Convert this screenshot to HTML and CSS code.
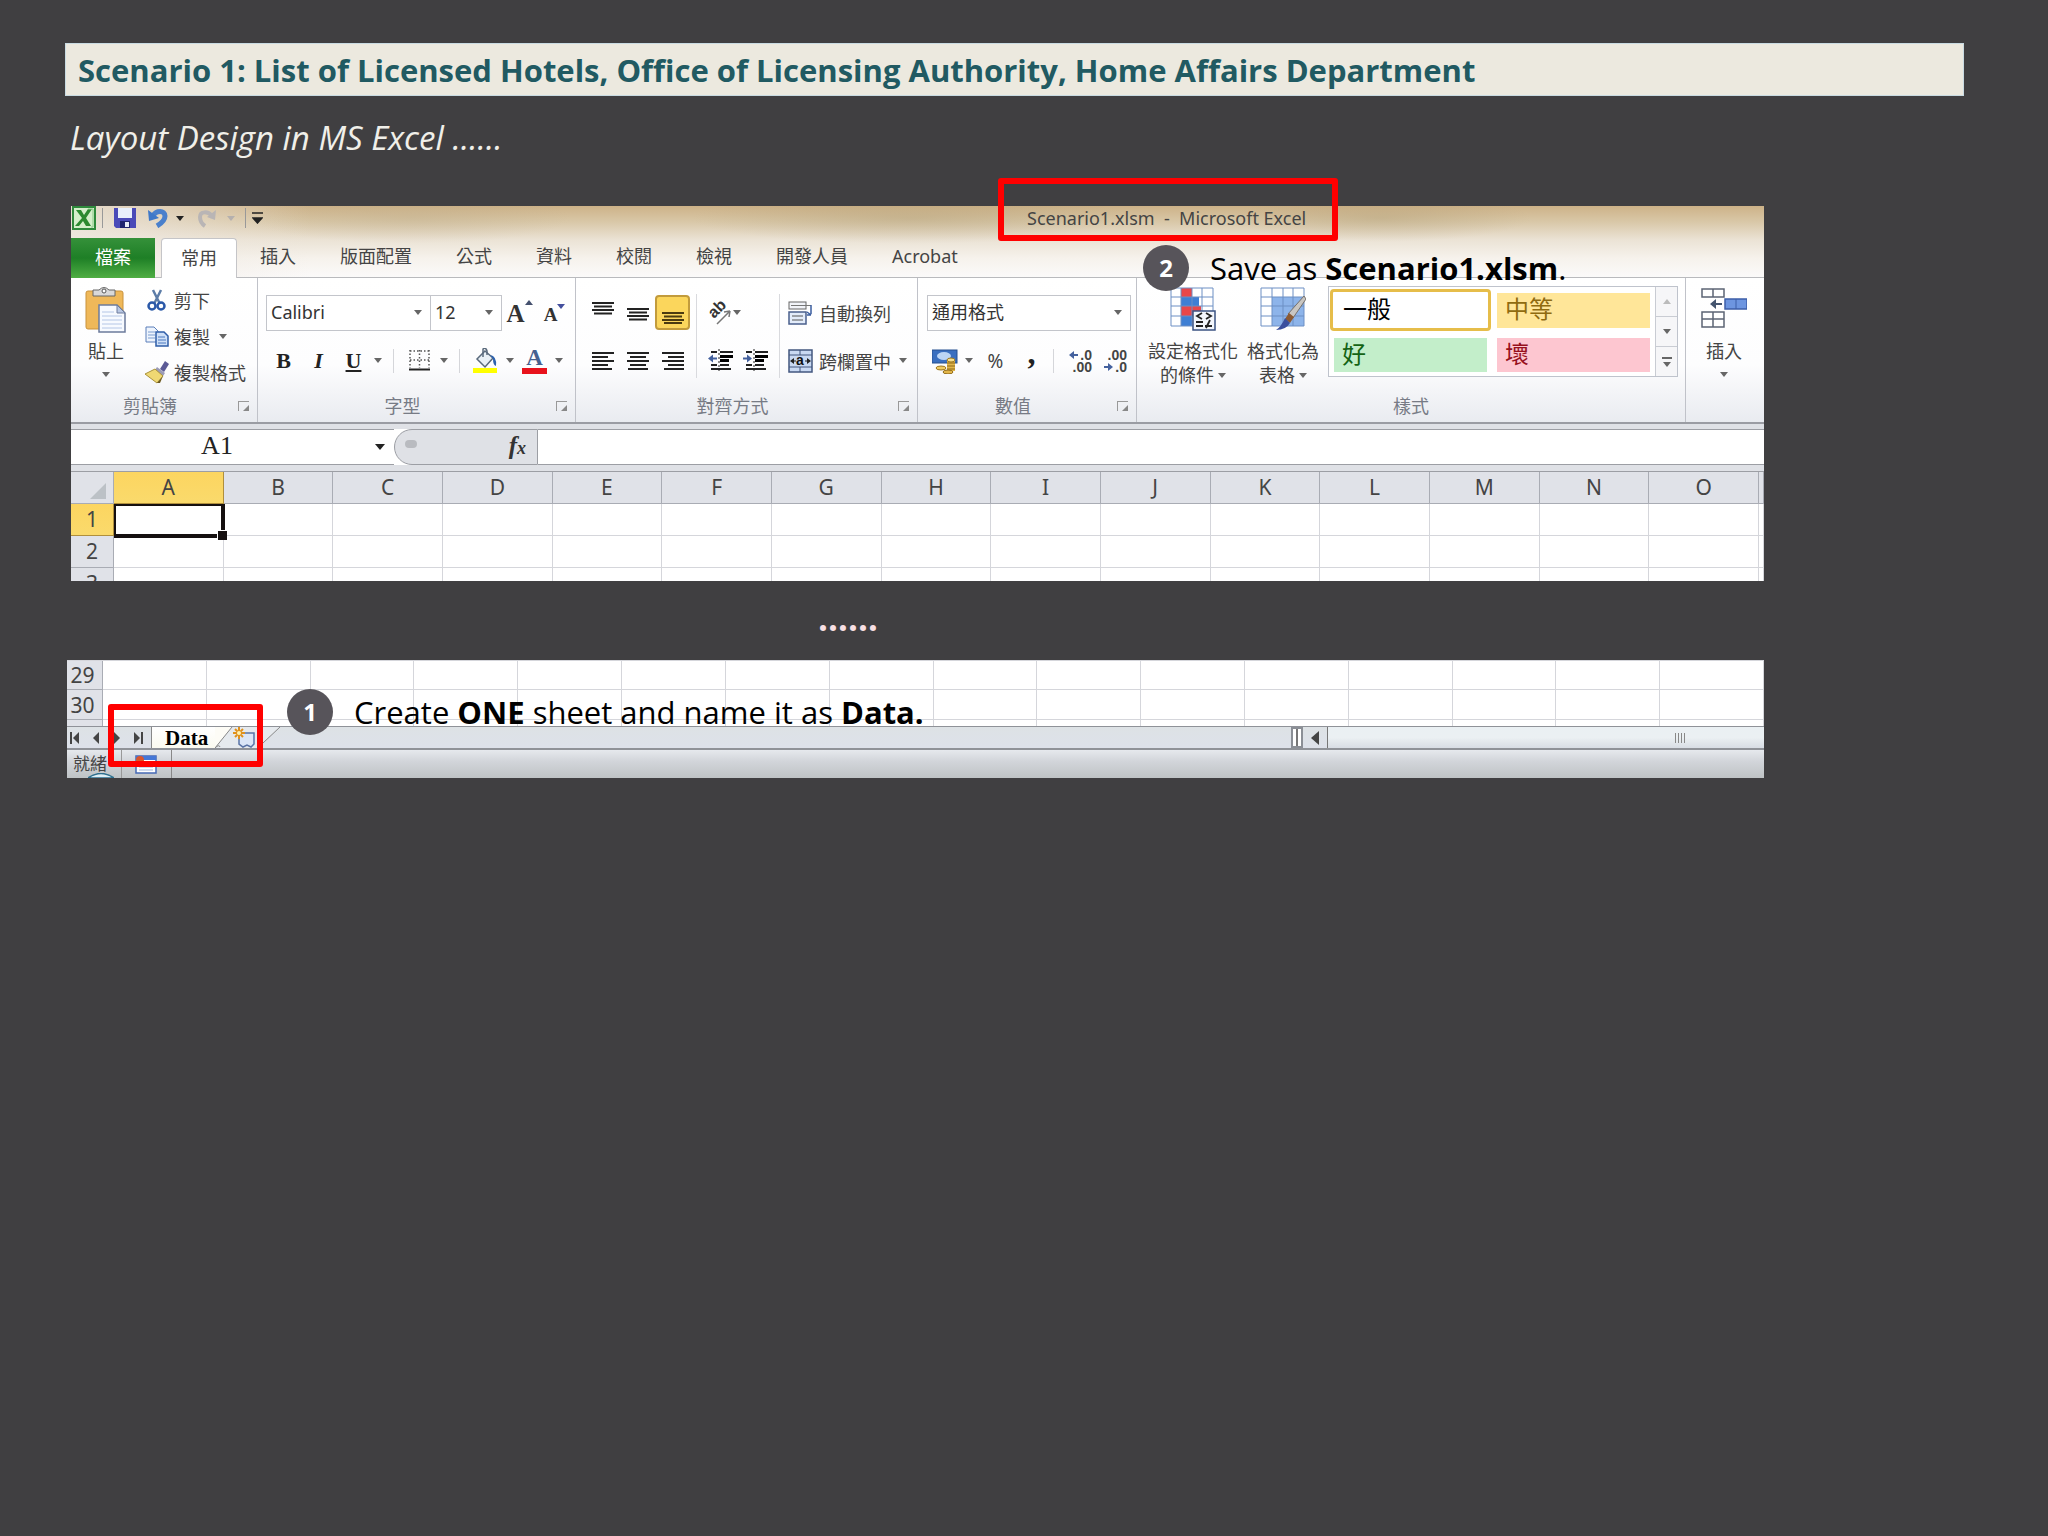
FILE: index.html
```html
<!DOCTYPE html>
<html lang="en">
<head>
<meta charset="utf-8">
<title>Scenario 1: List of Licensed Hotels</title>
<link rel="stylesheet" href="styles.css">
</head>
<body>
<main class="slide">
  <h1 class="slide-title">Scenario 1: List of Licensed Hotels, Office of Licensing Authority, Home Affairs Department</h1>
  <p class="subtitle">Layout Design in MS Excel ……</p>

  <section class="shot shot-top" lang="zh-Hant">
    <div class="chrome">
      <div class="titlebar">
        <svg class="ic" width="24" height="24" viewBox="0 0 24 24"><rect x="1" y="1" width="22" height="22" fill="#d5efcb" stroke="#2f8a3c" stroke-width="2"/><path d="M4 4h5l3 5 4-6h4l-6 9 5 8h-5l-3-5-4 5H3l7-8z" fill="#2c8a30"/><path d="M16 3h5v18h-2" stroke="#8cc98a" fill="none"/></svg>
        <span class="bar-sep"></span>
        <button class="qat" aria-label="Save"><svg width="22" height="22" viewBox="0 0 22 22"><path d="M0 1h22v20H2l-2-2z" fill="#4a4ab8"/><path d="M4 1h14v10H4z" fill="#e8effb"/><path d="M6 14h10v7H6z" fill="#20246e"/><path d="M11 15h4v5h-4z" fill="#e9ecf7"/></svg></button>
        <button class="qat undo" aria-label="Undo"><svg width="20" height="20" viewBox="0 0 20 20"><path d="M5 8C8 2 17 2 17 8c0 4-3 7-8 10" fill="none" stroke="#4a80cc" stroke-width="5"/><path d="M0 2l1 11 10-3z" fill="#3f78c8"/></svg></button>
        <span class="caret black"></span>
        <button class="qat redo" aria-label="Redo"><svg width="20" height="20" viewBox="0 0 20 20"><path d="M15 8C11 3 3 3 3 9c0 4 2 7 5 9" fill="none" stroke="#b9b5b5" stroke-width="4"/><path d="M19 2l-1 10-8-3z" fill="#b9b5b5"/></svg></button>
        <span class="caret pale"></span>
        <span class="bar-sep second"></span>
        <svg width="11" height="12" viewBox="0 0 11 12"><path d="M0 1h11M1 6h9l-4.500 5z" fill="#222" stroke="#222" stroke-width="1.500"/></svg>
        <span class="doc-name">Scenario1.xlsm&nbsp; -&nbsp; Microsoft Excel</span>
      </div>
      <nav class="tabs">
        <button class="tab file">檔案</button>
        <button class="tab active">常用</button>
        <button class="tab">插入</button>
        <button class="tab">版面配置</button>
        <button class="tab">公式</button>
        <button class="tab">資料</button>
        <button class="tab">校閱</button>
        <button class="tab">檢視</button>
        <button class="tab">開發人員</button>
        <button class="tab">Acrobat</button>
      </nav>
    </div>

    <div class="ribbon">
      <div class="group clipboard">
        <div class="body">
          <button class="big paste">
            <svg width="42" height="46" viewBox="0 0 42 46"><rect x="1" y="4" width="37" height="38" rx="2" fill="#efb859" stroke="#c9923c"/><path d="M8 3h6q5-5 10 0h6v6H8z" fill="#d9d9d9" stroke="#666"/><circle cx="19" cy="4" r="2" fill="#fff" stroke="#555"/><path d="M14 18h18l8 8v19H14z" fill="#f7faff" stroke="#6c7b9c" stroke-width="1.500"/><path d="M32 18v8h8z" fill="#b9c8e4" stroke="#6c7b9c"/><path d="M17 25h12M17 29h20M17 33h20M17 37h20M17 41h20" stroke="#b4c6e6"/></svg>
            <span>貼上</span><span class="caret"></span>
          </button>
          <div class="stack">
            <button><svg width="24" height="24" viewBox="0 0 24 24"><path d="M8 2l7 14M16 2L9 16" stroke="#5d7da8" stroke-width="2.500"/><circle cx="7" cy="18" r="3.500" fill="none" stroke="#2a58a8" stroke-width="2.500"/><circle cx="16" cy="18" r="3.500" fill="none" stroke="#2a58a8" stroke-width="2.500"/></svg>剪下</button>
            <button><svg width="24" height="24" viewBox="0 0 24 24"><path d="M1 3h8l4 4v11H1z" fill="#eef4fd" stroke="#5a7fba"/><path d="M3 8h7M3 11h7M3 14h7" stroke="#7b9dd0"/><path d="M11 8h8l4 4v10H11z" fill="#cfe0f8" stroke="#2f5da8" stroke-width="1.500"/><path d="M13 13h7M13 16h8M13 19h8" stroke="#4b79bf"/></svg>複製<span class="caret"></span></button>
            <button><svg width="24" height="24" viewBox="0 0 24 24"><path d="M15 9l5-8 4 3-5 8z" fill="#5b5a96"/><path d="M12 7l8 6-2 3-8-6z" fill="#9b9bb6"/><path d="M10 9l8 7-6 7L0 14z" fill="#efd873" stroke="#a8913a"/><path d="M12 23l6-7-3 7z" fill="#6d5a21"/></svg>複製格式</button>
          </div>
        </div>
        <div class="foot"><span>剪貼簿</span><i class="launcher"></i></div>
      </div>

      <div class="group font">
        <div class="body rows">
          <div class="row">
            <label class="pick face"><select aria-label="Font"><option>Calibri</option></select><span class="caret"></span></label>
            <label class="pick size"><select aria-label="Font size"><option>12</option></select><span class="caret"></span></label>
            <button class="slot grow" aria-label="Grow font">A<i class="up"></i></button>
            <button class="slot shrink" aria-label="Shrink font">A<i class="down"></i></button>
          </div>
          <div class="row">
            <button class="slot serif"><b>B</b></button>
            <button class="slot serif"><b><em>I</em></b></button>
            <button class="slot serif"><b><u>U</u></b></button>
            <span class="cslot"><span class="caret"></span></span>
            <span class="vsep"></span>
            <button class="slot" aria-label="Borders"><svg width="21" height="21" viewBox="0 0 21 21"><path d="M1 1h19M1 10h19M1 0v18M10.500 0v18M20 0v18" stroke="#555" stroke-width="1.500" stroke-dasharray="1.500 2" fill="none"/><path d="M0 19.500h21" stroke="#222" stroke-width="2"/></svg></button>
            <span class="cslot"><span class="caret"></span></span>
            <span class="vsep"></span>
            <button class="slot" aria-label="Fill color"><svg width="26" height="26" viewBox="0 0 26 26"><rect y="20" width="24" height="5" fill="#ff0"/><path d="M4 11l8-8 8 7-8 9z" fill="#e9f0f6" stroke="#5a6a7c" stroke-width="1.500"/><path d="M10 9V1q3-2 4 2v4" fill="none" stroke="#5a6a7c" stroke-width="1.500"/><path d="M17 7q7 1 6 11-3-1-3-7z" fill="#2d62ae"/></svg></button>
            <span class="cslot"><span class="caret"></span></span>
            <button class="slot fontcolor" aria-label="Font color">A</button>
            <span class="cslot"><span class="caret"></span></span>
          </div>
        </div>
        <div class="foot"><span>字型</span><i class="launcher"></i></div>
      </div>

      <div class="group align">
        <div class="body">
          <div class="block">
            <div class="row">
              <button class="slot" aria-label="Top align"><svg width="22" height="22" viewBox="0 0 22 22"><path d="M0 1h22M2 4.500h18M0 8h22M2 11.500h18" stroke="#222" stroke-width="1.800"/></svg></button>
              <button class="slot" aria-label="Middle align"><svg width="22" height="22" viewBox="0 0 22 22"><path d="M0 7h22M2 10.500h18M0 14h22M2 17.500h18" stroke="#222" stroke-width="1.800"/></svg></button>
              <button class="slot on" aria-label="Bottom align"><svg width="22" height="22" viewBox="0 0 22 22"><path d="M0 11h22M2 14.500h18M0 18h22M2 21h18" stroke="#4a3a10" stroke-width="1.800"/></svg></button>
            </div>
            <div class="row">
              <button class="slot" aria-label="Align left"><svg width="22" height="20" viewBox="0 0 22 20"><path d="M0 2h22M0 6h16M0 10h22M0 14h16M0 18h20" stroke="#222" stroke-width="2"/></svg></button>
              <button class="slot" aria-label="Center"><svg width="22" height="20" viewBox="0 0 22 20"><path d="M0 2h22M3 6h16M0 10h22M3 14h16M1 18h20" stroke="#222" stroke-width="2"/></svg></button>
              <button class="slot" aria-label="Align right"><svg width="22" height="20" viewBox="0 0 22 20"><path d="M0 2h22M6 6h16M0 10h22M6 14h16M2 18h20" stroke="#222" stroke-width="2"/></svg></button>
            </div>
          </div>
          <span class="tall-sep"></span>
          <div class="block mid">
            <div class="row">
              <button class="slot orient" aria-label="Orientation"><svg width="28" height="28" viewBox="0 0 28 28"><text x="0" y="0" transform="translate(10 20) rotate(-45)" font-family="Liberation Sans" font-weight="bold" font-size="16" fill="#333">ab</text><path d="M13 25L25 13M26 12l-6 1M26 12l-1 6" stroke="#777" stroke-width="1.500" fill="none"/></svg></button>
              <span class="caret"></span>
            </div>
            <div class="row">
              <button class="slot" aria-label="Decrease indent"><svg width="26" height="24" viewBox="0 0 26 24"><path d="M12 3h13M12 16h9M3 3h6M3 16h6M3 20h20" stroke="#222" stroke-width="2"/><path d="M12 7.500h13M12 11.500h9" stroke="#000" stroke-width="3"/><path d="M11 0v24" stroke="#222" stroke-dasharray="2 2"/><path d="M0 9.500l5-4v3h4v2H5v3z" fill="#44619e"/></svg></button>
              <button class="slot" aria-label="Increase indent"><svg width="26" height="24" viewBox="0 0 26 24"><path d="M12 3h13M12 16h9M3 3h6M3 16h6M3 20h20" stroke="#222" stroke-width="2"/><path d="M12 7.500h13M12 11.500h9" stroke="#000" stroke-width="3"/><path d="M11 0v24" stroke="#222" stroke-dasharray="2 2"/><path d="M9 9.500l-5-4v3H0v2h4v3z" fill="#44619e"/></svg></button>
            </div>
          </div>
          <span class="tall-sep"></span>
          <div class="block wrap">
            <button class="row wide"><svg width="25" height="24" viewBox="0 0 25 24"><rect x="1" y="1" width="17" height="7" fill="#f2f4f9" stroke="#666"/><path d="M3 4.500h20" stroke="#777"/><rect x="1" y="11" width="17" height="12" fill="#e3ecfa" stroke="#4a5f8c" stroke-width="1.500"/><path d="M4 15h11M4 19h11" stroke="#555"/><path d="M23 4v9M23 14l-4-3M23 14h-4" stroke="#3b5ea0" stroke-width="1.500"/></svg>自動換列</button>
            <button class="row wide"><svg width="25" height="24" viewBox="0 0 25 24"><rect x="1" y="1" width="23" height="22" fill="#c9d9f3" stroke="#43577f" stroke-width="1.500"/><path d="M1 6h23M1 18h23M12 1v5M12 18v5" stroke="#43577f"/><path d="M2 12l4-3v6zM23 12l-4-3v6z" fill="#222"/><path d="M5 12h3M17 12h3" stroke="#222"/><text x="8" y="16" font-family="Liberation Sans" font-weight="bold" font-size="14" fill="#111">a</text></svg>跨欄置中<span class="caret"></span></button>
          </div>
        </div>
        <div class="foot"><span>對齊方式</span><i class="launcher"></i></div>
      </div>

      <div class="group number">
        <div class="body rows">
          <div class="row"><label class="pick fmt"><select aria-label="Number format"><option>通用格式</option></select><span class="caret"></span></label></div>
          <div class="row">
            <button class="slot" aria-label="Accounting format"><svg width="26" height="26" viewBox="0 0 26 26"><rect x="0" y="2" width="25" height="13" fill="#3a6fc0" stroke="#27508f"/><ellipse cx="12" cy="8" rx="7" ry="4" fill="#bcd5f5"/><path d="M15 12h8v11h-8z" fill="#e2b64a"/><path d="M15 15h8M15 18h8M15 21h8" stroke="#8e6a1b"/><ellipse cx="19" cy="12" rx="4" ry="2" fill="#f6df8d" stroke="#9b761f"/><ellipse cx="9" cy="20" rx="5" ry="2" fill="#efca62" stroke="#9b761f"/><ellipse cx="16" cy="24" rx="5" ry="2" fill="#e2b64a" stroke="#8e6a1b"/></svg></button>
            <span class="cslot"><span class="caret"></span></span>
            <button class="slot pct">%</button>
            <button class="slot comma" aria-label="Comma style">,</button>
            <span class="vsep"></span>
            <button class="slot dec" aria-label="Increase decimal"><span class="dl"><svg width="9" height="8" viewBox="0 0 9 8"><path d="M0 4l5-4v3h4v2H5v3z" fill="#44619e"/></svg>.0</span><span>.00</span></button>
            <button class="slot dec" aria-label="Decrease decimal"><span>.00</span><span class="dl"><svg width="9" height="8" viewBox="0 0 9 8"><path d="M9 4L4 0v3H0v2h4v3z" fill="#44619e"/></svg>.0</span></button>
          </div>
        </div>
        <div class="foot"><span>數值</span><i class="launcher"></i></div>
      </div>

      <div class="group styles">
        <div class="body">
          <button class="big">
            <svg width="46" height="44" viewBox="0 0 46 44"><rect x="1" y="1" width="42" height="38" fill="#fff"/><path d="M11 1h11v9H11zM11 19h20v10H11z" fill="#e8474a"/><path d="M11 10h18v9H11zM11 29h11v10H11z" fill="#3f7fd4"/><path d="M1 1h42v38H1zM1 10h42M1 19h42M1 29h42M11 1v38M22 1v38M32 1v38" fill="none" stroke="#6d8fc4"/><rect x="23" y="24" width="22" height="19" fill="#f3f6fc" stroke="#3b5383" stroke-width="1.500"/><path d="M32 26l-5 3 5 3M26 35h7M26 39h7M36 26l5 3-5 3M35 39h7M40 33l-4 8" fill="none" stroke="#222" stroke-width="1.800"/></svg>
            <span>設定格式化</span><span class="line">的條件<span class="caret"></span></span>
          </button>
          <button class="big">
            <svg width="46" height="44" viewBox="0 0 46 44"><rect x="1" y="1" width="43" height="38" fill="#fff"/><path d="M12 10h32v29H12z" fill="#8db4ea"/><path d="M1 1h43v38H1zM1 10h43M1 19h43M1 29h43M12 1v38M23 1v38M33 1v38" fill="none" stroke="#6d8fc4"/><path d="M44 9l2 3-13 19-5-4z" fill="#c9c6c2" stroke="#77716b"/><path d="M29 26l5 4-4 6-5-4z" fill="#8c5a33"/><path d="M25 31l5 5q-4 7-14 7 5-3 9-12z" fill="#3a4f9e"/></svg>
            <span>格式化為</span><span class="line">表格<span class="caret"></span></span>
          </button>
          <div class="gallery">
            <div class="cells">
              <button class="cell normal">一般</button>
              <button class="cell neutral">中等</button>
              <button class="cell good">好</button>
              <button class="cell bad">壞</button>
            </div>
            <div class="spin">
              <button aria-label="Previous styles"><i class="up grey"></i></button>
              <button aria-label="Next styles"><span class="caret"></span></button>
              <button class="more" aria-label="More styles"><span class="caret"></span></button>
            </div>
          </div>
        </div>
        <div class="foot"><span>樣式</span></div>
      </div>

      <div class="group cells-group">
        <div class="body">
          <button class="big">
            <svg width="46" height="44" viewBox="0 0 46 44"><path d="M1 2h22v8H1zM12 2v8M1 25h22v15H1zM12 25v15M1 32h22" fill="#fff" stroke="#5c6474" stroke-width="1.500"/><rect x="24" y="12" width="22" height="10" fill="#6d95e0" stroke="#3c5ea8" stroke-width="1.500"/><path d="M35 12v10" stroke="#3c5ea8"/><path d="M9 17l6-5v4h6v2h-6v4z" fill="#44546e"/></svg>
            <span>插入</span><span class="caret"></span>
          </button>
        </div>
      </div>
    </div>

    <div class="formula-bar">
      <div class="namebox"><input aria-label="Name box" value="A1"><span class="caret black"></span></div>
      <div class="fx-wrap"><div class="fx"><i class="knob"></i><button aria-label="Insert function"><em>f<small>x</small></em></button></div></div>
      <input class="formula" aria-label="Formula">
    </div>

    <div class="sheet-clip">
      <table class="sheet">
        <colgroup><col class="rh"><col span="15"><col class="edge"></colgroup>
        <tr><th class="corner"><svg width="18" height="18" viewBox="0 0 18 18"><path d="M17 1v16H1z" fill="#bcc1c6"/></svg></th><th class="sel">A</th><th>B</th><th>C</th><th>D</th><th>E</th><th>F</th><th>G</th><th>H</th><th>I</th><th>J</th><th>K</th><th>L</th><th>M</th><th>N</th><th>O</th><th></th></tr>
        <tr><th class="sel">1</th><td class="cursor"></td><td></td><td></td><td></td><td></td><td></td><td></td><td></td><td></td><td></td><td></td><td></td><td></td><td></td><td></td><td></td></tr>
        <tr><th>2</th><td></td><td></td><td></td><td></td><td></td><td></td><td></td><td></td><td></td><td></td><td></td><td></td><td></td><td></td><td></td><td></td></tr>
        <tr><th>3</th><td></td><td></td><td></td><td></td><td></td><td></td><td></td><td></td><td></td><td></td><td></td><td></td><td></td><td></td><td></td><td></td></tr>
      </table>
    </div>

    <div class="frame frame-name"></div>
    <div class="note note-save" lang="en"><span class="num">2</span><p>Save as <b>Scenario1.xlsm</b>.</p></div>
  </section>

  <p class="ellipsis">……</p>

  <section class="shot shot-bottom" lang="zh-Hant">
    <div class="sheet-clip">
      <table class="sheet">
        <colgroup><col class="rh"><col span="16"></colgroup>
        <tr><th>29</th><td></td><td></td><td></td><td></td><td></td><td></td><td></td><td></td><td></td><td></td><td></td><td></td><td></td><td></td><td></td><td></td></tr>
        <tr><th>30</th><td></td><td></td><td></td><td></td><td></td><td></td><td></td><td></td><td></td><td></td><td></td><td></td><td></td><td></td><td></td><td></td></tr>
        <tr><th></th><td></td><td></td><td></td><td></td><td></td><td></td><td></td><td></td><td></td><td></td><td></td><td></td><td></td><td></td><td></td><td></td></tr>
      </table>
    </div>
    <div class="sheetbar">
      <div class="nav">
        <button aria-label="First sheet"><svg width="10" height="12" viewBox="0 0 10 12"><path d="M1 0v12" stroke="#444" stroke-width="2"/><path d="M9 0v12L3 6z" fill="#444"/></svg></button>
        <button aria-label="Previous sheet"><svg width="10" height="12" viewBox="0 0 10 12"><path d="M8 0v12L2 6z" fill="#444"/></svg></button>
        <button aria-label="Next sheet"><svg width="10" height="12" viewBox="0 0 10 12"><path d="M2 0v12l6-6z" fill="#444"/></svg></button>
        <button aria-label="Last sheet"><svg width="10" height="12" viewBox="0 0 10 12"><path d="M9 0v12" stroke="#444" stroke-width="2"/><path d="M1 0v12l6-6z" fill="#444"/></svg></button>
      </div>
      <button class="sheet-tab">Data</button>
      <button class="new-sheet" aria-label="Insert sheet"><svg width="66" height="22" viewBox="0 0 66 22"><path d="M0 0h17L0 21z" fill="#fdfcf6"/><path d="M0 21L17 0h48L49 15q-3 6-8 6z" fill="#e6eaee"/><path d="M0 21L17 0M48 16L65 0" stroke="#888" fill="none"/><path d="M0 21q4-4 5-1" stroke="#888" fill="none"/><path d="M24 6h15v11l-3 3-4-2-4 2-4-3z" fill="#dbe6f7" stroke="#5a74a6" stroke-width="1.500"/><path d="M24 0v12M18 6h12M20 2l8 8M28 2l-8 8" stroke="#e0921e" stroke-width="2"/><circle cx="24" cy="6" r="2" fill="#fff3b0"/></svg></button>
      <span class="split"></span>
      <button class="scroll-left" aria-label="Scroll left"><svg width="8" height="14" viewBox="0 0 8 14"><path d="M8 0v14L0 7z" fill="#444"/></svg></button>
      <div class="scrollbar"><i class="grip"></i></div>
    </div>
    <div class="status">
      <span class="ready">就緒</span>
      <span class="macro"><svg width="22" height="19" viewBox="0 0 22 19"><rect x="1" y="1" width="20" height="17" fill="#fff" stroke="#4569b5" stroke-width="1.500"/><path d="M1 1h20v4H1z" fill="#4577d6"/><path d="M4 9h14M4 12h14M4 15h14" stroke="#9fb6de"/><circle cx="5" cy="5" r="4" fill="#d9552b"/></svg></span>
      <svg class="globe" width="26" height="5" viewBox="0 0 26 5"><path d="M0 5Q13-4 26 5z" fill="#dfeef4" stroke="#2d6f8e" stroke-width="1.500"/></svg>
    </div>

    <div class="frame frame-tab"></div>
    <div class="note note-create" lang="en"><span class="num">1</span><p>Create <b>ONE</b> sheet and name it as <b>Data.</b></p></div>
  </section>
</main>
</body>
</html>
```
FILE: styles.css
```css
* { box-sizing: border-box; }
body {
  margin: 0;
  min-height: 100vh;
  background: #403f41;
  color: #000;
  font-family: "Open Sans", "Noto Sans", sans-serif;
}
button, input, select {
  margin: 0;
  padding: 0;
  border: 0;
  background: none;
  font: inherit;
  color: inherit;
}
svg { display: block; flex: none; }
i { font-style: normal; }

/* slide */
.slide { padding: 43px 84px 43px 65px; }
.slide-title {
  margin: 0;
  padding: 0 12px;
  height: 53px;
  border: 1px solid #c9dbe2;
  background: #ece9df;
  color: #215a62;
  font-size: 31px;
  line-height: 52px;
  white-space: nowrap;
}
.subtitle {
  margin: 21px 0 0 5px;
  height: 68px;
  color: #f0efe9;
  font-size: 33px;
  font-style: italic;
  line-height: 42px;
}
.ellipsis {
  margin: 0 0 0 753px;
  height: 79px;
  color: #f8dfe3;
  font-size: 35px;
  font-weight: bold;
  line-height: 74px;
}

/* screenshots */
.shot {
  position: relative;
  background: #fff;
  font-family: "Noto Sans", "Noto Sans CJK TC", sans-serif;
  font-size: 18px;
  color: #444;
}
.shot-top { margin: 21px 200px 0 6px; }
.shot-bottom { margin: 0 200px 0 2px; }

.chrome {
  background:
    radial-gradient(ellipse 160px 26px at 340px 12px, #b5a48344, transparent),
    radial-gradient(ellipse 220px 26px at 840px 12px, #a8966e55, transparent),
    radial-gradient(ellipse 150px 24px at 1310px 12px, #a8966e55, transparent),
    linear-gradient(90deg, #efe9e2cc, #efe9e200 240px),
    linear-gradient(#cdb288, #d9c8a8 16px, #ebe3d5 34px, #f6f2ec 52px, #fbfafa);
}
.titlebar {
  display: flex;
  align-items: center;
  height: 30px;
  padding: 0 0 6px 1px;
}
.bar-sep { width: 1px; height: 20px; margin: 0 11px 0 6px; background: #999; }
.bar-sep.second { margin: 0 6px 0 10px; }
.qat { margin-right: 12px; }
.qat.undo { margin-right: 8px; }
.qat.redo { margin: 0 10px 0 13px; }
.doc-name { margin-left: 764px; font-size: 18px; color: #444; white-space: nowrap; }

.caret {
  display: inline-block;
  flex: none;
  border: 4px solid transparent;
  border-top: 5px solid #666;
  border-bottom: 0;
}
.caret.black { border-top-color: #222; }
.caret.pale { border-top-color: #b5b0ae; }
.up { display: inline-block; border: 4px solid transparent; border-bottom: 5px solid #44506e; border-top: 0; }
.down { display: inline-block; border: 4px solid transparent; border-top: 5px solid #44509e; border-bottom: 0; }
.up.grey { border-bottom-color: #bbb; }

.tabs {
  display: flex;
  height: 42px;
  padding-top: 2px;
  border-bottom: 1px solid #b9babd;
}
.tab { padding: 0 22px 4px; line-height: 34px; white-space: nowrap; }
.tab.file {
  width: 84px;
  height: 40px;
  padding: 0 0 2px;
  background: linear-gradient(#35913a, #1e7f26 50%, #4fae43);
  color: #fff;
}
.tab.active {
  height: 40px;
  width: 76px;
  margin: 0 1px 0 6px;
  padding: 0 0 2px;
  background: #fff;
  border: 1px solid #c5c5c8;
  border-bottom: 0;
  border-radius: 4px 4px 0 0;
  box-shadow: 0 1px #fff;
}

/* ribbon */
.ribbon {
  display: flex;
  height: 146px;
  background: linear-gradient(#fff, #fdfdfe 60%, #e9ebf0);
  border-bottom: 2px solid #9a9ca3;
}
.group {
  display: flex;
  flex-direction: column;
  flex: none;
  border-right: 1px solid #c0c2c9;
}
.clipboard { width: 187px; }
.font { width: 318px; }
.align { width: 342px; }
.number { width: 219px; }
.styles { width: 549px; }
.cells-group { flex: 1; border-right: 0; }
.body { display: flex; height: 115px; }
.foot {
  position: relative;
  height: 26px;
  padding-right: 28px;
  line-height: 26px;
  text-align: center;
  color: #777b85;
}
.launcher {
  position: absolute;
  right: 8px;
  top: 8px;
  width: 11px;
  height: 10px;
  border: 1px solid #999;
  border-width: 1px 0 0 1px;
}
.launcher::after {
  content: "";
  position: absolute;
  right: 0;
  bottom: 0;
  border: 3px solid #888;
  border-top-color: transparent;
  border-left-color: transparent;
}
.big {
  display: flex;
  flex-direction: column;
  align-items: center;
  padding-top: 9px;
  line-height: 24px;
  white-space: nowrap;
}
.big svg { margin-bottom: 8px; }
.big > .caret { margin-top: 9px; }
.line .caret { margin: 0 0 4px 4px; }
.paste { width: 70px; }
.paste svg { margin-bottom: 6px; }
.stack { display: flex; flex-direction: column; padding: 4px 0 0 4px; }
.stack button { display: flex; align-items: center; gap: 5px; height: 36px; white-space: nowrap; }
.stack .caret { margin-left: 4px; }

.rows, .block { display: flex; flex-direction: column; gap: 13px; padding-top: 17px; }
.rows { padding-left: 8px; }
.row { display: flex; align-items: center; height: 35px; }
.slot { display: flex; align-items: center; justify-content: center; width: 35px; height: 35px; flex: none; }
.cslot { display: flex; justify-content: center; width: 14px; }
.vsep { width: 1px; height: 24px; margin: 0 8px; background: #d5d6da; }
.pick {
  position: relative;
  display: flex;
  align-items: center;
  height: 36px;
  border: 1px solid #c3c5cb;
  background: #fff;
}
.pick select { width: 100%; height: 100%; padding: 0 0 2px 4px; appearance: none; color: #333; }
.pick .caret { position: absolute; right: 8px; }
.face { width: 165px; }
.size { width: 71px; border-left: 0; }
.fmt { width: 204px; }
.serif { font: 22px "Liberation Serif", serif; color: #222; }
.grow, .shrink { align-items: baseline; padding-top: 5px; font: bold 25px "Liberation Serif", serif; color: #333; }
.shrink { font-size: 19px; padding-top: 9px; }
.grow i, .shrink i { align-self: flex-start; }
.fontcolor { height: 26px; border: solid #e8121c; border-width: 0 0 6px; width: 25px; margin: 0 5px; font: bold 23px "Liberation Serif", serif; color: #46618f; }
.on { border: 2px solid #c29b3c; border-radius: 4px; background: #fbd65c; }

.align .block:first-child { padding-left: 9px; }
.tall-sep { width: 1px; height: 84px; margin: 16px 6px 0; background: #d9dade; }
.mid { width: 70px; }
.orient { width: 30px; }
.wrap { margin-left: 2px; }
.wide { gap: 6px; white-space: nowrap; }
.wide .caret { margin-left: 2px; }

.number .rows { padding-left: 9px; }
.number .vsep { margin: 0 6px 0 7px; }
.pct { font-size: 19px; padding-left: 4px; }
.comma { font: bold 32px "Liberation Serif", serif; padding: 0 0 14px 6px; color: #222; }
.dec { flex-direction: column; align-items: flex-end; padding-right: 3px; font: bold 14px/12px "Liberation Sans", sans-serif; }
.dl { display: flex; align-items: center; gap: 2px; }

.styles .body { gap: 9px; padding-left: 11px; }
.gallery {
  display: flex;
  width: 350px;
  height: 91px;
  margin-top: 8px;
  border: 1px solid #bfc3cc;
  background: #fff;
}
.cells { flex: 1; display: grid; grid-template-columns: 1fr 1fr; grid-template-rows: 1fr 1fr; }
.cell { margin: 6px 5px 4px; padding: 0 0 2px 8px; text-align: left; font-size: 24px; line-height: 32px; }
.normal { margin: 2px 1px 1px; padding-left: 10px; border: 3px solid #e6bd4a; border-radius: 4px; color: #000; }
.neutral { background: #ffe699; color: #8f6b10; }
.good { background: #c3eeca; color: #146314; }
.bad { background: #fdc6d0; color: #97101c; }
.spin { display: flex; flex-direction: column; width: 22px; border-left: 1px solid #c9ccd3; background: #f6f6f8; }
.spin button { flex: 1; display: flex; align-items: center; justify-content: center; border-bottom: 1px solid #c9ccd3; }
.spin button.more { border-bottom: 0; flex-direction: column; gap: 3px; }
.more::before { content: ""; width: 10px; height: 2px; background: #666; }
.styles .foot { padding: 0; }
.cells-group .big { margin-left: 15px; }

/* formula bar */
.formula-bar {
  display: flex;
  height: 48px;
  padding: 5px 0 6px;
  background: #dfe1e6;
  border-bottom: 1px solid #9c9ea4;
}
.namebox {
  display: flex;
  align-items: center;
  width: 323px;
  background: #fff;
  border: solid #9c9ea4;
  border-width: 1px 0;
}
.namebox input { width: 292px; padding-bottom: 2px; text-align: center; font: 26px "Liberation Serif", serif; color: #222; }
.namebox .caret { margin-left: 12px; border-width: 6px 5px 0; }
.fx-wrap { display: flex; width: 144px; background: #fff; }
.fx {
  flex: 1;
  display: flex;
  align-items: center;
  justify-content: space-between;
  padding: 0 11px 0 10px;
  border: 1px solid #9c9ea4;
  border-radius: 18px 0 0 18px;
  background: #dfe1e6;
}
.fx button { font: bold 25px/28px "Liberation Serif", serif; color: #333; }
.fx small { font-size: 18px; }
.knob { width: 12px; height: 8px; border-radius: 4px; background: #b9bbc0; margin-bottom: 6px; }
.formula { flex: 1; min-width: 0; background: #fff; border: solid #9c9ea4; border-width: 1px 0; }

/* grids */
.sheet-clip { overflow: hidden; }
.sheet {
  width: 100%;
  table-layout: fixed;
  border-collapse: separate;
  border-spacing: 0;
}
.sheet th, .sheet td { height: 32px; padding: 0; border: solid #d5d6db; border-width: 0 1px 1px 0; }
.sheet th { background: #e0e2e8; border-color: #a9acb4; color: #444; font-weight: normal; font-size: 21px; line-height: 31px; }
.sheet .rh { width: 43px; }
.sheet .edge { width: 5px; }
.shot-top .sheet-clip { height: 109px; }
.sheet th.sel { background: linear-gradient(#fcd560, #fada6c); border-color: #b08f3c; }
.corner svg { margin: 6px 0 0 18px; }
.cursor { position: relative; }
.cursor::before { content: ""; position: absolute; inset: 0 -2px -3px 0; border: solid #151010; border-width: 2px 4px 4px 2px; }
.cursor::after { content: ""; position: absolute; right: -4px; bottom: -5px; width: 9px; height: 9px; background: #151010; border: solid #fff; border-width: 1px 0 0 1px; }

.shot-bottom .sheet-clip { height: 66px; border-top: 1px solid #d5d6db; }
.shot-bottom .rh { width: 36px; }
.shot-bottom .sheet th { line-height: 28px; padding-right: 4px; }
.shot-bottom .sheet th, .shot-bottom .sheet td { height: 30px; }
.shot-bottom tr:first-child th, .shot-bottom tr:first-child td { height: 28px; }

.sheetbar {
  display: flex;
  height: 24px;
  background: linear-gradient(#dde2e5, #dde1ea);
  border: solid #8f9298;
  border-width: 1px 0 2px;
}
.nav { display: flex; align-items: center; justify-content: space-between; width: 85px; padding: 0 8px 0 3px; border-right: 1px solid #888; }
.sheet-tab {
  width: 63px;
  padding-left: 13px;
  background: linear-gradient(#fff, #fbfaf0);
  text-align: left;
  white-space: nowrap;
  font: bold 21px/20px "Liberation Serif", serif;
  color: #000;
}
.split { width: 12px; margin-left: auto; border: 2px solid #8b8f96; background: linear-gradient(90deg, #fff 3px, #777 3px, #777 5px, #fff 5px); }
.scroll-left { display: flex; align-items: center; justify-content: center; width: 25px; border-right: 1px solid #777; }
.scrollbar { display: flex; align-items: center; justify-content: flex-end; width: 436px; padding-right: 79px; background: linear-gradient(#eaf0f3, #ebf0f3 50%, #d8dde4); }
.grip { width: 10px; height: 10px; background: repeating-linear-gradient(90deg, #888 0 1px, transparent 1px 3px); }

.status {
  position: relative;
  display: flex;
  height: 28px;
  background: linear-gradient(#e6e9ed, #d2d5da 40%, #bfc3c5);
}
.ready { width: 55px; padding-left: 6px; line-height: 28px; border-right: 1px solid #999; font-size: 17px; }
.macro { width: 50px; padding: 5px 0 0 13px; border-right: 1px solid #888; }
.globe { position: absolute; left: 21px; bottom: 0; }

/* callouts laid over the screenshots */
.frame { position: absolute; border: 6px solid #f00; border-radius: 3px; height: 63px; }
.frame-name { left: 927px; top: -28px; width: 340px; }
.frame-tab { left: 41px; top: 44px; width: 155px; }
.note {
  position: absolute;
  display: flex;
  align-items: center;
  gap: 21px;
  color: #000;
  font-family: "Open Sans", "Noto Sans", sans-serif;
  font-size: 31px;
  line-height: 46px;
  white-space: nowrap;
}
.note p { margin: 0; }
.note-save { left: 1072px; top: 39px; }
.note-create { left: 220px; top: 29px; }
.num {
  width: 46px;
  height: 46px;
  border-radius: 50%;
  background: #57545a;
  color: #fff;
  text-align: center;
  font-size: 24px;
  font-weight: bold;
}
```
